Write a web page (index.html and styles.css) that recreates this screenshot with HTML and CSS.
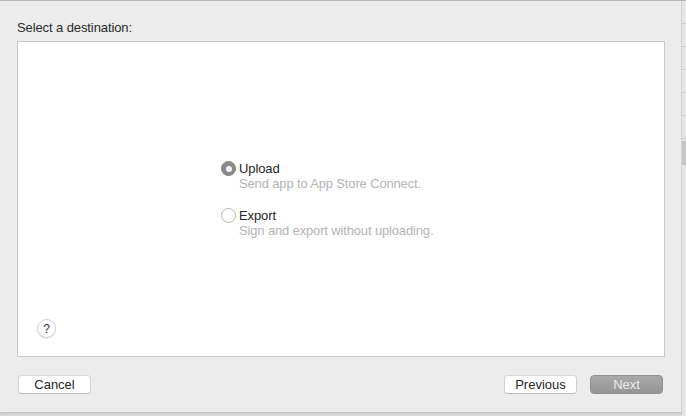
FILE: index.html
```html
<!DOCTYPE html>
<html>
<head>
<meta charset="utf-8">
<link rel="stylesheet" href="styles.css">
</head>
<body>
<div class="screen">
  <div class="dialog">
    <div class="title">Select a destination:</div>
    <div class="panel">
      <div class="options">
        <div class="option">
          <span class="radio radio-on"><span class="dot"></span></span>
          <div class="texts">
            <div class="label">Upload</div>
            <div class="desc">Send app to App Store Connect.</div>
          </div>
        </div>
        <div class="option option-2">
          <span class="radio"></span>
          <div class="texts">
            <div class="label">Export</div>
            <div class="desc">Sign and export without uploading.</div>
          </div>
        </div>
      </div>
      <div class="help">?</div>
    </div>
    <div class="footer">
      <button class="btn">Cancel</button>
      <div class="spacer"></div>
      <button class="btn">Previous</button>
      <button class="btn btn-next">Next</button>
    </div>
  </div>
  <div class="behind">
    <div class="b-row"></div>
    <div class="b-row"></div>
    <div class="b-row"></div>
    <div class="b-row"></div>
    <div class="b-row"></div>
    <div class="b-row"></div>
    <div class="b-thumb"></div>
  </div>
</div>
</body>
</html>
```

FILE: styles.css
```css
html, body {
  margin: 0;
  padding: 0;
}
body {
  width: 686px;
  height: 416px;
  overflow: hidden;
  background: #d9d9d9;
  font-family: "Liberation Sans", Arial, Helvetica, sans-serif;
  font-size: 13px;
  color: #2a2a2a;
}
.screen {
  display: flex;
  width: 686px;
  height: 416px;
  border-top: 1px solid #b9b9b9;
  box-sizing: border-box;
}
.dialog {
  width: 682px;
  height: 411px;
  box-sizing: border-box;
  background: #ececec;
  border-right: 1px solid #d2d2d2;
  padding: 19px 17px 0 17px;
  display: flex;
  flex-direction: column;
  box-shadow: 0 1px 2px rgba(0,0,0,0.12);
}
.title {
  line-height: 15px;
  height: 15px;
  margin-bottom: 6px;
  color: #2b2b2b;
  letter-spacing: -0.1px;
}
.panel {
  width: 648px;
  height: 316px;
  box-sizing: border-box;
  background: #ffffff;
  border: 1px solid #c9c9c9;
  display: grid;
  grid-template-columns: 1fr;
  grid-template-rows: 1fr;
}
.options {
  grid-area: 1 / 1;
  align-self: center;
  padding-left: 203px;
  padding-top: 1px;
}
.option {
  display: flex;
  align-items: flex-start;
}
.option-2 {
  margin-top: 17px;
}
.radio {
  width: 15px;
  height: 15px;
  box-sizing: border-box;
  border-radius: 50%;
  border: 1px solid #b5b5b5;
  background: #fff;
  margin-top: 0px;
  margin-right: 3px;
  display: flex;
  align-items: center;
  justify-content: center;
  flex-shrink: 0;
}
.radio-on {
  background: #8a8a8a;
  border-color: #828282;
}
.dot {
  width: 6px;
  height: 6px;
  border-radius: 50%;
  background: #f4f4f4;
}
.texts {
  display: flex;
  flex-direction: column;
}
.label {
  line-height: 15px;
  color: #262626;
  letter-spacing: -0.1px;
}
.desc {
  line-height: 15px;
  color: #b4b4b4;
  letter-spacing: -0.15px;
}
.help {
  grid-area: 1 / 1;
  align-self: end;
  justify-self: start;
  margin: 0 0 18px 19px;
  width: 19px;
  height: 19px;
  box-sizing: border-box;
  border-radius: 50%;
  border: 1px solid #cfcfcf;
  background: #fff;
  box-shadow: 0 1px 1px rgba(0,0,0,0.08);
  font-size: 12px;
  line-height: 18px;
  text-align: center;
  color: #3a3a3a;
}
.footer {
  display: flex;
  align-items: center;
  margin-top: 18px;
  height: 19px;
  gap: 13px;
}
.spacer {
  flex: 1;
}
.btn {
  font-family: "Liberation Sans", Arial, Helvetica, sans-serif;
  font-size: 13px;
  width: 73px;
  height: 19px;
  padding: 0;
  box-sizing: border-box;
  border: 1px solid #d0d0d0;
  border-top-color: #d8d8d8;
  border-bottom-color: #bcbcbc;
  border-radius: 4px;
  background: #ffffff;
  color: #262626;
  line-height: 17px;
}
.btn:first-child {
  margin-left: 1px;
  width: 73px;
}
.btn-next {
  background: linear-gradient(#a9a9a9, #959595);
  border-color: #8f8f8f;
  color: #ececec;
  margin-right: 1px;
}
.behind {
  width: 4px;
  height: 415px;
  background: #e6e6e6;
  display: flex;
  flex-direction: column;
}
.b-row {
  height: 22px;
  border-bottom: 1px solid #d0d0d0;
}
.b-thumb {
  margin-top: 2px;
  height: 24px;
  background: #c6c6c6;
}
```
